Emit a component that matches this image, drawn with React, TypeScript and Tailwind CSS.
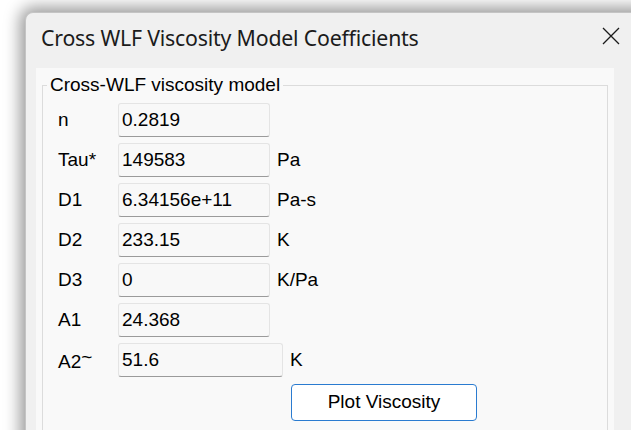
type Coefficient = {
  label: string;
  value: string;
  unit?: string;
  wide?: boolean;
};

const coefficients: Coefficient[] = [
  { label: "n", value: "0.2819" },
  { label: "Tau*", value: "149583", unit: "Pa" },
  { label: "D1", value: "6.34156e+11", unit: "Pa-s" },
  { label: "D2", value: "233.15", unit: "K" },
  { label: "D3", value: "0", unit: "K/Pa" },
  { label: "A1", value: "24.368" },
  { label: "A2", value: "51.6", unit: "K", wide: true },
];

const CoefficientRow = ({ item }: { item: Coefficient }) => (
  <div className="flex items-center h-[34px]">
    <span className="w-[60px]">
      {item.label}
      {item.label === "A2" && <span className="align-[5px]">~</span>}
    </span>
    <div
      className={`${
        item.wide ? "w-[165px]" : "w-[152px]"
      } h-[34px] pl-[3px] pt-[2px] bg-[#f8f8f8] border border-[#e4e4e4] border-b-[#9a9a9a] rounded-[3px]`}
    >
      {item.value}
    </div>
    {item.unit && <span className="ml-[7px]">{item.unit}</span>}
  </div>
);

const CloseIcon = () => (
  <svg width="18" height="18" viewBox="0 0 18 18" className="text-[#1b1b1b]">
    <path d="M1 1 L17 17 M17 1 L1 17" stroke="currentColor" strokeWidth="1.3" fill="none" />
  </svg>
);

const App = () => {
  return (
    <div className="w-[631px] h-[430px] overflow-hidden bg-white pl-[25px] pt-[12px]">
      <div className="w-[640px] h-[460px] rounded-tl-[8px] bg-[#f0f0f0] border-l border-t border-[#c4c4c4] shadow-[0_0_16px_5px_rgba(0,0,0,0.4)]">
        {/* title bar */}
        <div className="flex items-start h-[55px] pt-[11px] pl-[15px] pr-[45px]">
          <h1 className="flex-1 text-[21.3px] leading-[28px] text-[#1b1b1b] font-['Noto_Sans','Open_Sans',sans-serif] tracking-[-0.2px]">
            Cross WLF Viscosity Model Coefficients
          </h1>
          <div className="pt-[3px]">
            <CloseIcon />
          </div>
        </div>

        <div className="ml-[10px] w-[578px] h-[400px] bg-[#f9f9f9] pt-[7px] px-[6px] font-['Liberation_Sans',Arial,sans-serif] text-[19px] text-black">
          <fieldset className="h-[420px] border border-[#dcdcdc] pl-[15px] pt-[8px]">
            <legend className="ml-[-11px] px-[3px] leading-[20px]">
              Cross-WLF viscosity model
            </legend>
            <div className="flex flex-col gap-[6px]">
              {coefficients.map((item) => (
                <CoefficientRow key={item.label} item={item} />
              ))}
            </div>
            <button className="mt-[7px] ml-[233px] w-[186px] h-[37px] bg-white border border-[#2a7bd0] rounded-[4px] text-[19px] text-black">
              Plot Viscosity
            </button>
          </fieldset>
        </div>
      </div>
    </div>
  );
};

export default App;
